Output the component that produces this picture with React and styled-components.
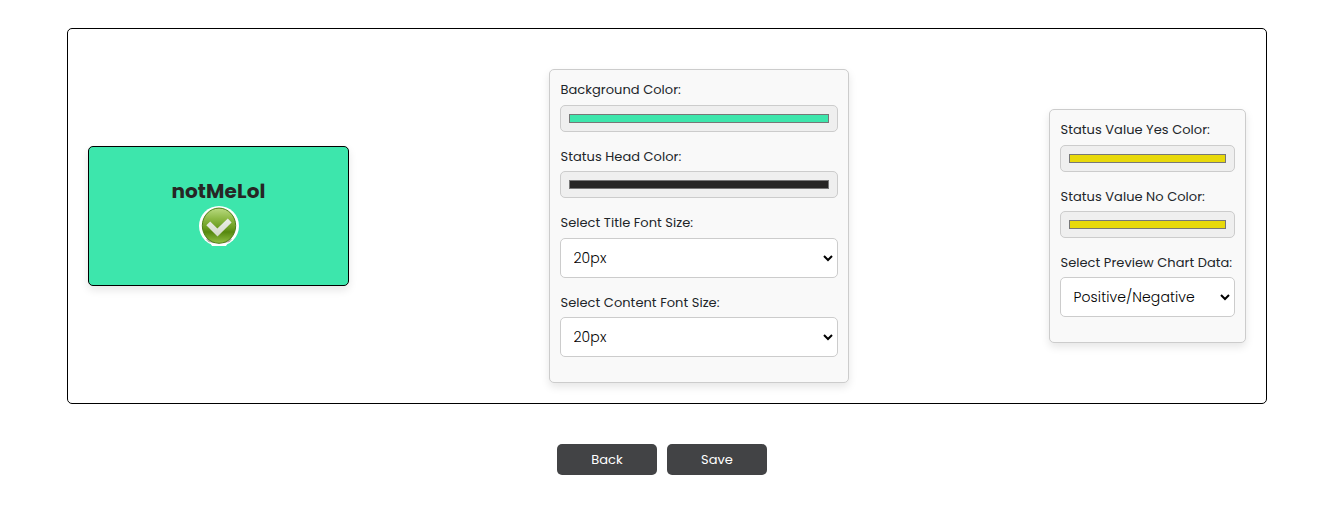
import React, { useState } from 'react';
import styled, { createGlobalStyle } from 'styled-components';

const GlobalStyle = createGlobalStyle`
  *, *::before, *::after { box-sizing: border-box; }
  body {
    margin: 0;
    background: #fff;
    color: #212529;
    font-family: Poppins, Inter, 'Open Sans', sans-serif;
    font-size: 13px;
    line-height: 19.5px;
  }
  button, input, select { font: inherit; }
`;

const Page = styled.main`
  width: 1328px;
  height: 513px;
  padding: 28px 61px 0 67px;
  overflow: hidden;
`;

const Workspace = styled.section`
  display: flex;
  align-items: center;
  justify-content: space-between;
  height: 376px;
  padding: 40px 20px 20px;
  border: 1px solid #000;
  border-radius: 5px;
`;

const PreviewCard = styled.article`
  display: flex;
  flex-direction: column;
  align-items: center;
  width: 261px;
  height: 140px;
  margin-bottom: 20px;
  padding-top: 29px;
  border: 1px solid #000;
  border-radius: 5px;
  background: ${(p) => p.$background};
  box-shadow: 0 4px 8px rgba(0, 0, 0, 0.1);
`;

const PreviewTitle = styled.h2`
  margin: 0;
  color: ${(p) => p.$color};
  font-size: 20px;
  font-weight: 700;
  line-height: 30px;
  letter-spacing: 0.12px;
`;

const StatusIcon = styled.svg`
  display: block;
  width: 40px;
  height: 40px;
`;

const Panel = styled.form`
  width: ${(p) => p.$width}px;
  margin-top: ${(p) => p.$offset || 0}px;
  padding: 10px;
  border: 1px solid #ccc;
  border-radius: 5px;
  background: #f9f9f9;
  box-shadow: 0 4px 8px rgba(0, 0, 0, 0.1);
`;

const Field = styled.div`
  margin-bottom: 14.85px;
`;

const Label = styled.label`
  display: block;
  height: 19.5px;
  margin-bottom: 5.1px;
  padding: 0.2px 0 0 0.5px;
  white-space: nowrap;
  letter-spacing: 0.04px;
`;

const ColorInput = styled.input`
  display: block;
  width: 100%;
  height: 27px;
  padding: 8px;
  border: 1px solid #ccc;
  border-radius: 5px;
  background: #efefef;

  &::-webkit-color-swatch-wrapper { padding: 0; }
  &::-webkit-color-swatch { border: 1px solid #777; border-radius: 0; }
`;

const SelectBox = styled.div`
  display: flex;
  height: 40px;
  padding-right: 1px;
  border: 1px solid #ccc;
  border-radius: 5px;
  background: #fff;
`;

const Select = styled.select`
  flex: 1;
  min-width: 0;
  padding: 8px 0 8px 8.5px;
  border: 0;
  background: transparent;
  color: #000;
  font-size: 14px;
  font-weight: 300;
  letter-spacing: 0.1px;
`;

const Actions = styled.div`
  display: flex;
  justify-content: center;
  gap: 10px;
  margin: 40px 10px 0 0;
`;

const Button = styled.button`
  width: 100px;
  height: 31px;
  padding: 0;
  border: 0;
  border-radius: 5px;
  background: #424345;
  color: #fff;
  font-weight: 400;
`;

function CheckBadge() {
  return (
    <StatusIcon viewBox="0 0 40 40" aria-label="Yes">
      <defs>
        <linearGradient id="disc" x1="0" y1="0" x2="0" y2="1">
          <stop offset="0" stopColor="#b9da80" />
          <stop offset="0.3" stopColor="#8db945" />
          <stop offset="0.55" stopColor="#6c9e22" />
          <stop offset="0.68" stopColor="#56880f" />
          <stop offset="1" stopColor="#91c045" />
        </linearGradient>
        <linearGradient id="tick" x1="0" y1="0" x2="0" y2="1">
          <stop offset="0" stopColor="#eceee8" />
          <stop offset="1" stopColor="#d2d9c8" />
        </linearGradient>
      </defs>
      <circle cx="20" cy="20" r="20" fill="#fff" />
      <path d="M7 33L10 31H30L33 33L30.5 36Q20 39 9.5 36Z" fill="#b3ada9" />
      <ellipse cx="20" cy="19.7" rx="16.7" ry="17.6" fill="url(#disc)" stroke="#4f7f17" strokeWidth="1" />
      <path d="M11 36.6Q20 39.2 29 36.6L27 40H13Z" fill="#fff" />
      <path d="M7.3 19.3L11.2 15.4L18.4 22.5L28.8 12.6L32.6 16.5L18.5 30.6Z" fill="url(#tick)" />
    </StatusIcon>
  );
}

function ColorField({ label, value, onChange }) {
  return (
    <Field>
      <Label>{label}</Label>
      <ColorInput type="color" aria-label={label} value={value} onChange={(e) => onChange(e.target.value)} />
    </Field>
  );
}

function SelectField({ label, options }) {
  return (
    <Field>
      <Label>{label}</Label>
      <SelectBox>
        <Select aria-label={label}>
          {options.map((option) => <option key={option}>{option}</option>)}
        </Select>
      </SelectBox>
    </Field>
  );
}

export default function App() {
  const [background, setBackground] = useState('#3de6ac');
  const [head, setHead] = useState('#272625');
  const [yes, setYes] = useState('#e8d90a');
  const [no, setNo] = useState('#e8d90a');

  return (
    <>
      <GlobalStyle />
      <Page>
        <Workspace>
          <PreviewCard $background={background}>
            <PreviewTitle $color={head}>notMeLol</PreviewTitle>
            <CheckBadge />
          </PreviewCard>
          <Panel $width={300}>
            <ColorField label="Background Color:" value={background} onChange={setBackground} />
            <ColorField label="Status Head Color:" value={head} onChange={setHead} />
            <SelectField label="Select Title Font Size:" options={['20px']} />
            <SelectField label="Select Content Font Size:" options={['20px']} />
          </Panel>
          <Panel $width={197} $offset={0.25}>
            <ColorField label="Status Value Yes Color:" value={yes} onChange={setYes} />
            <ColorField label="Status Value No Color:" value={no} onChange={setNo} />
            <SelectField label="Select Preview Chart Data:" options={['Positive/Negative']} />
          </Panel>
        </Workspace>
        <Actions>
          <Button type="button">Back</Button>
          <Button type="button">Save</Button>
        </Actions>
      </Page>
    </>
  );
}
